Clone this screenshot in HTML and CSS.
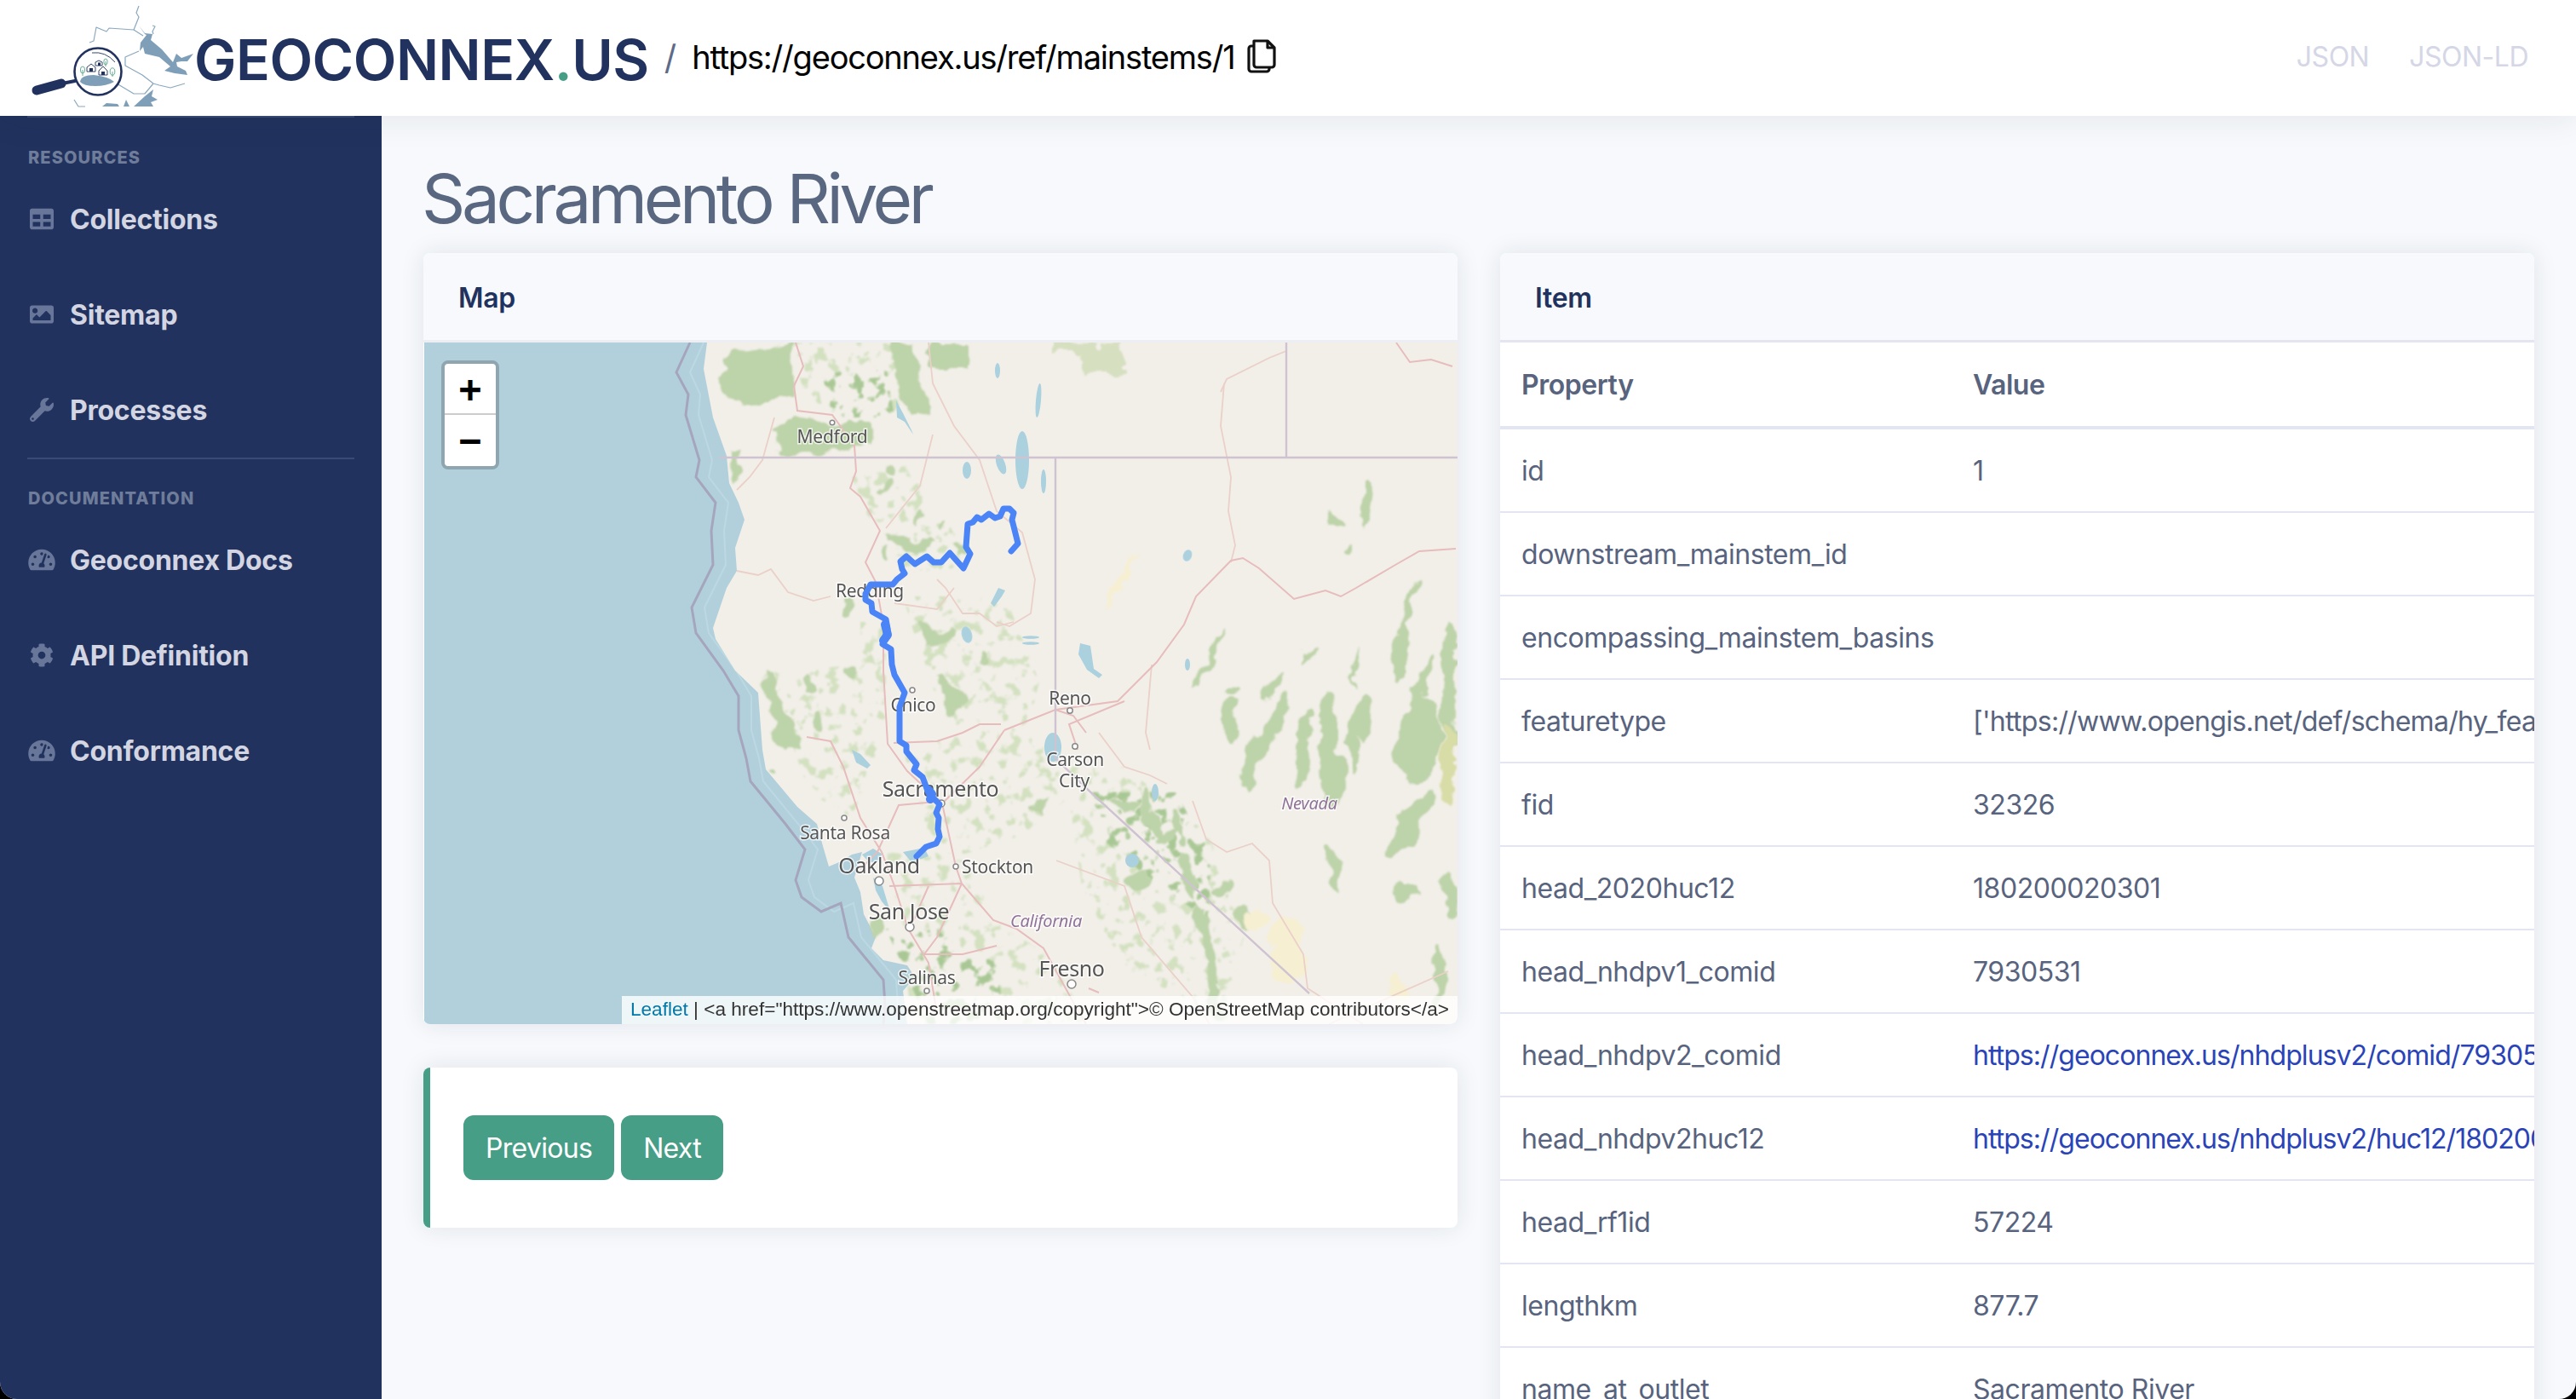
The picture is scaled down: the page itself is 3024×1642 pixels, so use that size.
FILE: index.html
```html
<!DOCTYPE html>
<html lang="en">
<head>
<meta charset="utf-8">
<title>Sacramento River</title>
<link rel="stylesheet" href="styles.css">
</head>
<body>
<svg class="defs" width="0" height="0">
  <symbol id="i-table" viewBox="0 0 512 512"><path d="M464 32H48C21.49 32 0 53.49 0 80v352c0 26.51 21.49 48 48 48h416c26.51 0 48-21.49 48-48V80c0-26.51-21.49-48-48-48zM224 416H64v-96h160v96zm0-160H64v-96h160v96zm224 160H288v-96h160v96zm0-160H288v-96h160v96z"/></symbol>
  <symbol id="i-image" viewBox="0 0 512 512"><path d="M464 448H48c-26.51 0-48-21.49-48-48V112c0-26.51 21.49-48 48-48h416c26.51 0 48 21.49 48 48v288c0 26.51-21.49 48-48 48zM112 120c-30.928 0-56 25.072-56 56s25.072 56 56 56 56-25.072 56-56-25.072-56-56-56zM64 384h384V272l-87.515-87.515c-4.686-4.686-12.284-4.686-16.971 0L208 320l-55.515-55.515c-4.686-4.686-12.284-4.686-16.971 0L64 336v48z"/></symbol>
  <symbol id="i-wrench" viewBox="0 0 512 512"><path d="M507.73 109.1c-2.24-9.03-13.54-12.09-20.12-5.51l-74.36 74.36-67.88-11.31-11.31-67.88 74.36-74.36c6.62-6.62 3.43-17.9-5.66-20.16-47.38-11.74-99.55.91-136.58 37.93-39.64 39.64-50.55 97.1-34.05 147.2L18.74 402.76c-24.99 24.99-24.99 65.51 0 90.5 24.99 24.99 65.51 24.99 90.5 0l213.21-213.21c50.12 16.71 107.47 5.68 147.37-34.22 37.07-37.07 49.7-89.32 37.91-136.73zM64 472c-13.25 0-24-10.75-24-24 0-13.26 10.75-24 24-24s24 10.74 24 24c0 13.25-10.75 24-24 24z"/></symbol>
  <symbol id="i-gauge" viewBox="0 0 576 512"><path d="M288 32C128.94 32 0 160.94 0 320c0 52.8 14.25 102.26 39.06 144.8 5.61 9.62 16.3 15.2 27.44 15.2h443c11.14 0 21.83-5.58 27.44-15.2C561.75 422.26 576 372.8 576 320c0-159.06-128.94-288-288-288zm0 64c14.71 0 26.58 10.13 30.32 23.65-1.11 2.26-2.64 4.23-3.45 6.67l-9.22 27.67c-5.13 3.49-10.97 6.01-17.64 6.01-17.67 0-32-14.33-32-32S270.33 96 288 96zM96 384c-17.67 0-32-14.33-32-32s14.33-32 32-32 32 14.33 32 32-14.33 32-32 32zm48-160c-17.67 0-32-14.33-32-32s14.33-32 32-32 32 14.33 32 32-14.33 32-32 32zm246.77-72.41l-61.33 184C343.13 347.33 352 364.54 352 384c0 11.72-3.38 22.55-8.88 32H232.88c-5.5-9.45-8.88-20.28-8.88-32 0-33.94 26.5-61.43 59.9-63.59l61.34-184.01c4.17-12.56 17.73-19.45 30.36-15.17 12.57 4.19 19.35 17.79 15.17 30.36zm14.66 57.2l15.52-46.55c3.47-1.29 7.13-2.23 11.05-2.23 17.67 0 32 14.33 32 32s-14.33 32-32 32c-11.38-.01-20.89-6.28-26.57-15.22zM480 384c-17.67 0-32-14.33-32-32s14.33-32 32-32 32 14.33 32 32-14.33 32-32 32z"/></symbol>
  <symbol id="i-cog" viewBox="0 0 512 512"><path d="M487.4 315.7l-42.6-24.6c4.3-23.2 4.3-47 0-70.2l42.6-24.6c4.9-2.8 7.1-8.6 5.5-14-11.1-35.6-30-67.8-54.7-94.6-3.8-4.1-10-5.1-14.8-2.3L380.8 110c-17.9-15.4-38.5-27.3-60.8-35.1V25.8c0-5.6-3.9-10.5-9.4-11.7-36.7-8.2-74.3-7.8-109.2 0-5.5 1.2-9.4 6.1-9.4 11.7V75c-22.2 7.9-42.8 19.8-60.8 35.1L88.7 85.5c-4.9-2.8-11-1.9-14.8 2.3-24.7 26.7-43.6 58.9-54.7 94.6-1.7 5.4.6 11.2 5.5 14L67.3 221c-4.3 23.2-4.3 47 0 70.2l-42.6 24.6c-4.9 2.8-7.1 8.6-5.5 14 11.1 35.6 30 67.8 54.7 94.6 3.8 4.1 10 5.1 14.8 2.3l42.6-24.6c17.9 15.4 38.5 27.3 60.8 35.1v49.2c0 5.6 3.9 10.5 9.4 11.7 36.7 8.2 74.3 7.8 109.2 0 5.5-1.2 9.4-6.1 9.4-11.7v-49.2c22.2-7.9 42.8-19.8 60.8-35.1l42.6 24.6c4.9 2.8 11 1.9 14.8-2.3 24.7-26.7 43.6-58.9 54.7-94.6 1.5-5.5-.7-11.3-5.6-14.1zM256 336c-44.1 0-80-35.9-80-80s35.9-80 80-80 80 35.9 80 80-35.9 80-80 80z"/></symbol>
</svg>
<div class="app">
  <header class="topbar">
    <svg class="logo" viewBox="0 0 192 136" width="192" height="136">
      <g transform="translate(-36 0)">
        <g fill="none" stroke="#8aa8bf" stroke-width="1.2" stroke-linejoin="round">
          <path d="M163 7 160 15 163 20 157 35 128 33 125 37 113 32 110 48 105 50"/>
          <path d="M157 35 168 42"/>
          <path d="M179 30 182 31 179 37 180 40"/>
          <path d="M163 60 147 67 147 77 167 88 180 98 187 100 200 103 217 98"/>
          <path d="M137 98 157 110 170 110 180 98"/>
          <path d="M87 117 92 125 100 125"/>
        </g>
        <g fill="#7f9fb8">
          <path d="M163 30 170 40 172 41 165 50 164 60 168 55 170 63 187 67 200 78 193 83 205 86 220 88 218 83 208 78 207 73 213 72 220 72 227 63 213 68 207 63 203 73 190 58 177 47 179 40 170 39Z"/>
          <path d="M120 125 125 121 138 122 140 125Z"/>
          <path d="M145 125 148 117 152 125Z"/>
          <path d="M157 125 170 113 180 105 178 113 185 117 177 120 180 125Z"/>
          <path d="M94 96Q95 88 110 88 128 90 134 96 125 101 112 101 98 101 94 96Z"/>
        </g>
        <circle cx="115" cy="84" r="27.5" fill="none" stroke="#21325e" stroke-width="2.6"/>
        <path d="M108 62Q124 60 135 73" fill="none" stroke="#21325e" stroke-width=".9"/>
        <path d="M88 95 73 98" stroke="#21325e" stroke-width="4" stroke-linecap="round"/>
        <path d="M72 98 43 106" stroke="#21325e" stroke-width="11" stroke-linecap="round"/>
        <g fill="#fff" stroke="#21325e" stroke-width=".9">
          <path d="M102 84V79L107 75 112 79V84Z"/>
          <path d="M112 77V73L116 71 120 73V77Z"/>
          <path d="M116 88V83L121 78 126 83V88Z"/>
        </g>
        <g fill="#21325e">
          <rect x="105" y="80" width="4" height="4"/>
          <rect x="115" y="73.500" width="3" height="3.500"/>
          <rect x="119" y="84" width="4" height="4"/>
        </g>
        <g fill="none" stroke="#5aa48c" stroke-width=".9">
          <ellipse cx="97" cy="82" rx="2.600" ry="4"/>
          <ellipse cx="124" cy="72.500" rx="2.200" ry="3.500"/>
          <ellipse cx="132" cy="84" rx="2.800" ry="4.200"/>
          <path d="M97 82V89M124 72V78M132 84V90"/>
        </g>
      </g>
    </svg>
    <span class="brand">GEOCONNEX<span class="brand-dot">.</span>US</span>
    <span class="crumb-sep">/</span>
    <span class="crumb">https://geoconnex.us/ref/mainstems/1</span>
    <svg class="copy" viewBox="0 0 34 40" width="34" height="40" fill="none" stroke="#111" stroke-width="3.200" stroke-linejoin="round">
      <path d="M8 2H24L32 10V30A3 3 0 0 1 29 33H11A3 3 0 0 1 8 30Z"/>
      <path d="M24 2V10H32"/>
      <path d="M8 8H5A3 3 0 0 0 2 11V35A3 3 0 0 0 5 38H23A3 3 0 0 0 26 35V33"/>
    </svg>
    <nav class="formats">
      <a class="format">JSON</a>
      <a class="format">JSON-LD</a>
    </nav>
  </header>
  <div class="body">
    <aside class="sidebar">
      <div class="side-rule"></div>
      <div class="side-label">RESOURCES</div>
      <a class="side-item"><span class="side-icon"><svg class="ic-w28"><use href="#i-table"/></svg></span>Collections</a>
      <a class="side-item"><span class="side-icon"><svg class="ic-w28"><use href="#i-image"/></svg></span>Sitemap</a>
      <a class="side-item"><span class="side-icon"><svg class="ic-w28"><use href="#i-wrench"/></svg></span>Processes</a>
      <div class="side-divider"></div>
      <div class="side-label side-label-next">DOCUMENTATION</div>
      <a class="side-item"><span class="side-icon"><svg class="ic-w32"><use href="#i-gauge"/></svg></span>Geoconnex Docs</a>
      <a class="side-item"><span class="side-icon"><svg class="ic-w28"><use href="#i-cog"/></svg></span>API Definition</a>
      <a class="side-item"><span class="side-icon"><svg class="ic-w32"><use href="#i-gauge"/></svg></span>Conformance</a>
    </aside>
    <main class="main">
      <h1 class="title">Sacramento River</h1>
      <div class="columns">
        <div class="col">
          <section class="card">
            <div class="card-head card-head-map"><span class="head-text">Map</span></div>
            <div class="map">
              <svg class="map-svg" viewBox="498 402 1213 800" width="1213" height="800">
                <defs>
                  <filter id="softer" x="-5%" y="-5%" width="110%" height="110%"><feGaussianBlur stdDeviation=".6"/></filter>
                  <filter id="organic" x="-5%" y="-5%" width="110%" height="110%">
                    <feTurbulence type="fractalNoise" baseFrequency=".035" numOctaves="3" seed="4" result="n"/>
                    <feDisplacementMap in="SourceGraphic" in2="n" scale="26" xChannelSelector="R" yChannelSelector="G"/>
                    <feGaussianBlur stdDeviation="1"/>
                  </filter>
                  <filter id="mottle" x="-5%" y="-5%" width="110%" height="110%">
                    <feTurbulence type="fractalNoise" baseFrequency=".07" numOctaves="3" seed="9" result="n"/>
                    <feColorMatrix in="n" type="matrix" values="0 0 0 0 0  0 0 0 0 0  0 0 0 0 0  10 0 0 0 -5.600" result="m"/>
                    <feComposite in="SourceGraphic" in2="m" operator="in"/>
                    <feGaussianBlur stdDeviation=".9"/>
                  </filter>
                </defs>
                <rect x="498" y="402" width="1213" height="800" fill="#b1d0dc"/>
                <g fill="none" filter="url(#softer)">
                  <path d="M826 402 810 437 822 463 820 487 836 540 832 560 855 590 850 623 852 663 827 713 832 743 864 787 882 817 882 857 891 890 896 917 937 967 960 997 949 1033 956 1053 979 1070 1002 1060 1011 1100 1052 1150 1054 1180 1052 1202" stroke="#bcd8e2" stroke-width="2"/>
                  <path d="M810 402 794 437 808 463 805 487 821 540 817 560 840 590 835 623 837 663 812 713 817 743 849 787 867 817 867 857 876 890 881 917 922 967 945 997 934 1033 941 1053 964 1070 987 1060 996 1100 1037 1150 1039 1180 1037 1202" stroke="#a5a6bd" stroke-width="3"/>
                </g>
                <path filter="url(#softer)" fill="#f2efe9" d="M830 402 826 433 837 490 853 535 856 567 867 590 874 610 863 643 865 670 853 690 837 737 840 750 863 787 890 813 895 880 899 903 936 947 959 967 966 993 973 1017 985 1012 1000 1003 1012 1000 1003 1030 1010 1047 1014 1073 1028 1100 1023 1113 1037 1127 1065 1133 1074 1147 1060 1163 1065 1202 1711 1202 1711 402Z"/>
                <g filter="url(#mottle)" fill="#d3e1c0">
                  <path d="M930 402 1046 402 1060 470 1040 495 990 480 945 470Z"/>
                  <path d="M1040 625 1110 610 1135 650 1120 680 1060 670Z"/>
                  <path d="M1000 560 1060 540 1090 580 1060 620 1020 610Z"/>
                  <path d="M1060 700 1180 700 1220 800 1200 880 1140 880 1090 800Z"/>
                  <path d="M900 790 1010 780 1030 880 1000 960 950 930Z"/>
                  <path d="M1010 730 1040 730 1040 880 1015 880Z"/>
                  <path d="M1060 880 1180 850 1240 880 1250 940 1200 980 1140 1000 1100 1010Z"/>
                  <path d="M1040 1000 1130 1010 1180 1090 1230 1120 1280 1202 1070 1202 1060 1100Z"/>
                  <path d="M1250 900 1320 900 1420 980 1460 1100 1440 1202 1320 1140 1270 1040Z"/>
                </g>
                <g filter="url(#mottle)" fill="#a9c795">
                  <path d="M1040 1090 1100 1090 1120 1110 1170 1130 1180 1202 1090 1202Z"/>
                  <path d="M1280 930 1380 930 1420 1000 1420 1080 1360 1040 1300 990Z"/>
                  <path d="M960 440 1040 430 1050 490 980 490Z"/>
                </g>
                <g filter="url(#organic)" fill="#bdd3a9">
                  <path d="M840 440 852 425 870 413 916 402 928 402 930 462 872 476 850 470Z"/>
                  <path d="M910 505 945 490 990 492 1020 498 1024 520 1000 528 950 533 916 528Z"/>
                  <path d="M1046 402 1072 402 1080 450 1092 488 1078 486 1068 494 1058 470 1052 440Z"/>
                  <path d="M1092 402 1134 402 1134 432 1092 432Z"/>
                  <path d="M857 528 874 528 866 560 860 568Z"/>
                  <path d="M1040 632 1076 626 1095 640 1084 648 1060 642 1042 640Z"/>
                  <path d="M1117 637 1128 635 1130 648 1120 650Z"/>
                  <path d="M992 704 1006 712 998 720 988 718Z"/>
                  <path d="M1076 728 1092 732 1116 742 1120 750 1098 753 1086 758 1082 745Z"/>
                  <path d="M1098 795 1108 795 1132 825 1122 836 1115 834 1100 812Z"/>
                  <ellipse cx="1156" cy="770" rx="5" ry="7"/>
                  <ellipse cx="1040" cy="656" rx="4" ry="9"/>
                  <ellipse cx="1080" cy="610" rx="3" ry="10"/>
                  <ellipse cx="1105" cy="620" rx="3" ry="8"/>
                  <ellipse cx="1040" cy="548" rx="5" ry="8"/>
                  <ellipse cx="1040" cy="570" rx="4" ry="9" transform="rotate(20 1040 570)"/>
                  <path d="M897 790 905 790 926 840 936 876 925 884 907 858 900 820Z"/>
                  <ellipse cx="959" cy="847" rx="6" ry="12"/>
                  <ellipse cx="950" cy="800" rx="5" ry="10"/>
                  <ellipse cx="1000" cy="790" rx="6" ry="8"/>
                  <ellipse cx="906" cy="903" rx="5" ry="3"/>
                  <path d="M1207 950 1230 937 1234 927 1224 952 1207 956Z"/>
                  <ellipse cx="1320" cy="945" rx="18" ry="8" transform="rotate(10 1320 945)"/>
                  <ellipse cx="1349" cy="956" rx="7" ry="34" transform="rotate(-15 1349 956)"/>
                  <ellipse cx="1370" cy="985" rx="18" ry="6" transform="rotate(-20 1370 985)"/>
                  <ellipse cx="1385" cy="970" rx="6" ry="20" transform="rotate(-25 1385 970)"/>
                  <ellipse cx="1606" cy="593" rx="8" ry="28" transform="rotate(12 1606 593)"/>
                  <ellipse cx="1567" cy="610" rx="13" ry="5" transform="rotate(35 1567 610)"/>
                  <ellipse cx="1580" cy="643" rx="5" ry="7"/>
                  <ellipse cx="1420" cy="773" rx="4" ry="42" transform="rotate(30 1420 773)"/>
                  <ellipse cx="1656" cy="707" rx="4" ry="32" transform="rotate(20 1656 707)"/>
                  <ellipse cx="1643" cy="767" rx="7" ry="38" transform="rotate(5 1643 767)"/>
                  <ellipse cx="1537" cy="770" rx="3" ry="15" transform="rotate(30 1537 770)"/>
                  <ellipse cx="1592" cy="783" rx="2" ry="30" transform="rotate(10 1592 783)"/>
                  <ellipse cx="1491" cy="807" rx="4" ry="18" transform="rotate(20 1491 807)"/>
                  <ellipse cx="1445" cy="810" rx="5" ry="6"/>
                  <ellipse cx="1702" cy="767" rx="8" ry="35"/>
                  <ellipse cx="1670" cy="800" rx="6" ry="35" transform="rotate(20 1670 800)"/>
                  <ellipse cx="1445" cy="847" rx="10" ry="28"/>
                  <ellipse cx="1491" cy="857" rx="10" ry="50" transform="rotate(25 1491 857)"/>
                  <ellipse cx="1533" cy="867" rx="7" ry="35" transform="rotate(10 1533 867)"/>
                  <ellipse cx="1560" cy="860" rx="11" ry="45"/>
                  <ellipse cx="1601" cy="843" rx="13" ry="28"/>
                  <ellipse cx="1588" cy="873" rx="7" ry="35"/>
                  <ellipse cx="1666" cy="867" rx="26" ry="50" transform="rotate(10 1666 867)"/>
                  <ellipse cx="1702" cy="833" rx="8" ry="50"/>
                  <ellipse cx="1468" cy="898" rx="9" ry="35" transform="rotate(15 1468 898)"/>
                  <ellipse cx="1528" cy="894" rx="9" ry="30"/>
                  <ellipse cx="1565" cy="917" rx="13" ry="30"/>
                  <ellipse cx="1656" cy="967" rx="12" ry="48" transform="rotate(35 1656 967)"/>
                  <ellipse cx="1565" cy="1021" rx="7" ry="28" transform="rotate(-15 1565 1021)"/>
                  <ellipse cx="1652" cy="1047" rx="12" ry="7"/>
                  <ellipse cx="1700" cy="1051" rx="8" ry="28"/>
                  <ellipse cx="1395" cy="1028" rx="6" ry="30" transform="rotate(-15 1395 1028)"/>
                  <ellipse cx="1436" cy="1040" rx="5" ry="12" transform="rotate(30 1436 1040)"/>
                  <ellipse cx="1459" cy="1074" rx="10" ry="13"/>
                  <ellipse cx="1335" cy="1032" rx="14" ry="8"/>
                  <ellipse cx="1415" cy="1109" rx="7" ry="48" transform="rotate(-15 1415 1109)"/>
                  <ellipse cx="1422" cy="1165" rx="6" ry="35" transform="rotate(-15 1422 1165)"/>
                  <ellipse cx="1689" cy="1147" rx="6" ry="45"/>
                  <ellipse cx="1032" cy="1087" rx="9" ry="15"/>
                </g>
                <g filter="url(#organic)">
                  <path d="M1241 402 1317 402 1317 441 1270 441 1270 415 1241 415Z" fill="#d6dfbf"/>
                  <ellipse cx="1700" cy="898" rx="10" ry="45" fill="#d8dca6"/>
                  <ellipse cx="1477" cy="1078" rx="16" ry="10" fill="#f6efd2"/>
                  <ellipse cx="1510" cy="1115" rx="20" ry="40" fill="#f6efd2"/>
                  <ellipse cx="1317" cy="677" rx="5" ry="38" transform="rotate(30 1317 677)" fill="#f6efd2"/>
                  <ellipse cx="1640" cy="1170" rx="8" ry="26" fill="#f6efd2"/>
                </g>
                <g filter="url(#softer)" fill="#abd0de">
                  <path d="M1052 470 1060 485 1070 505 1072 510 1062 495 1053 490Z"/>
                  <ellipse cx="1200" cy="540" rx="8" ry="34"/>
                  <ellipse cx="1175" cy="545" rx="5" ry="12" transform="rotate(-20 1175 545)"/>
                  <ellipse cx="1135" cy="552" rx="5" ry="10"/>
                  <ellipse cx="1219" cy="470" rx="3" ry="20" transform="rotate(5 1219 470)"/>
                  <ellipse cx="1171" cy="435" rx="3" ry="9"/>
                  <ellipse cx="1225" cy="565" rx="3" ry="14"/>
                  <path d="M1180 693 1176 700 1167 712 1163 708 1172 690Z"/>
                  <ellipse cx="1135" cy="745" rx="6" ry="10" transform="rotate(-15 1135 745)"/>
                  <ellipse cx="1210" cy="748" rx="10" ry="1.800"/>
                  <ellipse cx="1210" cy="755" rx="10" ry="1.800"/>
                  <path d="M1268 755 1280 758 1284 785 1294 792 1290 796 1276 786 1266 768Z"/>
                  <ellipse cx="1236" cy="877" rx="10" ry="17"/>
                  <ellipse cx="1394" cy="780" rx="3" ry="7"/>
                  <ellipse cx="1394" cy="652" rx="5" ry="7" transform="rotate(20 1394 652)"/>
                  <path d="M1000 880 1010 885 1022 898 1018 902 1005 895Z"/>
                  <ellipse cx="1329" cy="1010" rx="8" ry="8"/>
                  <ellipse cx="1356" cy="930" rx="4" ry="10"/>
                  <path d="M1012 1003 1025 996 1035 1002 1033 1012 1020 1012Z"/>
                  <path d="M1025 1030 1036 1040 1045 1070 1035 1058 1028 1045Z"/>
                  <path d="M1060 1000 1085 995 1090 1005 1070 1012Z"/>
                </g>
                <g fill="none" stroke="#ead0c8" stroke-width="1.800" filter="url(#softer)">
                  <path d="M909 490 895 540 880 560 865 575"/>
                  <path d="M865 670 890 675 905 668 925 695 955 705 975 700"/>
                  <path d="M1090 402 1095 450 1120 500 1150 540 1170 600 1200 625 1215 680 1210 720 1185 735 1170 730"/>
                  <path d="M1095 510 1080 570 1040 620"/>
                  <path d="M1100 680 1110 690 1130 720 1150 720 1170 735 1190 730"/>
                  <path d="M1120 690 1100 715 1050 708"/>
                  <path d="M1437 450 1433 500 1445 560 1442 600 1450 640 1445 660"/>
                  <path d="M1433 460 1440 445 1490 420 1510 412"/>
                  <path d="M1290 860 1320 900 1350 910 1370 920"/>
                  <path d="M1400 940 1416 985 1440 1000 1470 990 1490 1010 1494 1060 1530 1120 1535 1160 1600 1202"/>
                  <path d="M1350 880 1345 860 1352 780"/>
                  <path d="M1240 1010 1320 1040 1340 1100 1400 1170 1420 1202"/>
                  <path d="M1560 1202 1700 1140"/>
                </g>
                <g fill="none" stroke="#e7bcbd" stroke-width="2" filter="url(#softer)">
                  <path d="M934 402 943 430 932 453 936 482 977 487 1003 523 1005 553 998 573 1010 583 1033 623 1016 660 1028 683 1037 733 1037 787 1042 873 1065 905 1106 943 1122 1017 1129 1037 1166 1080 1193 1090 1225 1113 1262 1180 1275 1202"/>
                  <path d="M1179 857 1239 833 1312 823 1358 777 1390 733 1404 700 1445 658 1459 655 1478 667 1519 703 1556 693 1574 700 1592 690 1638 663 1666 647 1709 644"/>
                  <path d="M1106 943 1150 900 1179 857"/>
                  <path d="M1639 402 1655 425 1680 422 1705 430"/>
                  <path d="M947 865 975 870 990 900 1010 960 1035 1000 1050 1040 1066 1090 1090 1130 1100 1190"/>
                  <path d="M1049 872 1100 870 1130 860 1150 850 1175 850"/>
                  <path d="M1110 940 1055 945 1030 1000 1010 1020"/>
                  <path d="M1044 1040 1129 1037"/>
                  <path d="M1068 1090 1090 1040"/>
                  <path d="M1129 1037 1100 1100 1085 1120 1130 1120 1170 1110"/>
                  <path d="M1278 1160 1290 1165"/>
                  <path d="M1265 880 1255 850 1320 823"/>
                  <path d="M1239 833 1260 840 1275 860"/>
                </g>
                <g fill="none" stroke="#cfc3d2" stroke-width="2.400" filter="url(#softer)">
                  <path d="M845 537H1711"/>
                  <path d="M1239 537V890L1275 925 1537 1166"/>
                  <path d="M1510 402V537"/>
                </g>
                <g class="place-dots">
                  <circle cx="977" cy="496" r="2.800"/>
                  <circle cx="1071" cy="810" r="3"/>
                  <circle cx="1256" cy="834" r="3.200"/>
                  <circle cx="1262" cy="876" r="3.200"/>
                  <circle cx="1105" cy="943" r="4"/>
                  <circle cx="991" cy="960" r="3"/>
                  <circle cx="1032" cy="1034" r="5"/>
                  <circle cx="1122" cy="1017" r="3"/>
                  <circle cx="1068" cy="1088" r="5"/>
                  <circle cx="1088" cy="1163" r="3"/>
                  <circle cx="1258" cy="1155" r="5"/>
                </g>
                <g class="place">
                  <text x="977" y="520">Medford</text>
                  <text x="1021" y="701">Redding</text>
                  <text x="1072" y="835">Chico</text>
                  <text x="1256" y="827">Reno</text>
                  <text x="1262" y="899">Carson</text>
                  <text x="1261" y="924">City</text>
                  <text x="1104" y="935" class="place-lg">Sacramento</text>
                  <text x="992" y="985">Santa Rosa</text>
                  <text x="1032" y="1025" class="place-lg">Oakland</text>
                  <text x="1171" y="1025">Stockton</text>
                  <text x="1067" y="1079" class="place-lg">San Jose</text>
                  <text x="1088" y="1155">Salinas</text>
                  <text x="1258" y="1146" class="place-lg">Fresno</text>
                  <text x="1228" y="1088" class="place-state">California</text>
                  <text x="1537" y="950" class="place-state">Nevada</text>
                </g>
                <g fill="none" stroke="#4a84f7" stroke-width="7" stroke-linejoin="round" stroke-linecap="round">
                  <path d="M1187 647 1195 638 1188 610 1190 602 1185 597 1178 597 1174 606 1168 608 1161 603 1152 610 1147 607 1142 613 1136 615 1134 642 1139 650 1131 667 1122 657 1115 649 1105 660 1096 660 1088 653 1074 662 1064 653 1057 659 1059 668 1062 673 1053 680 1048 686 1022 686 1016 697 1016 704 1023 708 1024 718 1040 727 1042 738 1039 748 1036 756 1046 762 1047 780 1050 792 1062 813 1056 830 1056 870 1064 875 1064 882 1076 897 1073 904 1083 912 1090 931 1103 944 1099 954 1102 960 1101 973 1103 982 1099 990 1087 994 1076 1005"/>
                  <path d="M1039 733 1042 745 1037 752" stroke-width="10"/>
                  <path d="M1090 927 1094 932 1092 938" stroke-width="10"/>
                </g>
              </svg>
              <div class="zoom-box">
                <a class="zoom-btn zoom-in">+</a>
                <a class="zoom-btn">&#8722;</a>
              </div>
              <div class="attrib"><a class="attrib-link">Leaflet</a> | &lt;a href="https://www.openstreetmap.org/copyright"&gt;© OpenStreetMap contributors&lt;/a&gt;</div>
            </div>
          </section>
          <section class="card card-actions">
            <a class="btn">Previous</a>
            <a class="btn">Next</a>
          </section>
        </div>
        <div class="col">
          <section class="card card-item">
            <div class="card-head"><span class="head-text">Item</span></div>
            <table class="props">
              <colgroup><col class="col-key"><col></colgroup>
              <thead><tr><th>Property</th><th>Value</th></tr></thead>
              <tbody>
                <tr><td>id</td><td>1</td></tr>
                <tr><td>downstream_mainstem_id</td><td></td></tr>
                <tr><td>encompassing_mainstem_basins</td><td></td></tr>
                <tr><td>featuretype</td><td class="url-cell">['https://www.opengis.net/def/schema/hy_features/hyf/HY_River']</td></tr>
                <tr><td>fid</td><td>32326</td></tr>
                <tr><td>head_2020huc12</td><td>180200020301</td></tr>
                <tr><td>head_nhdpv1_comid</td><td>7930531</td></tr>
                <tr><td>head_nhdpv2_comid</td><td><a class="link">https://geoconnex.us/nhdplusv2/comid/7930531</a></td></tr>
                <tr><td>head_nhdpv2huc12</td><td><a class="link">https://geoconnex.us/nhdplusv2/huc12/180200020301</a></td></tr>
                <tr><td>head_rf1id</td><td>57224</td></tr>
                <tr><td>lengthkm</td><td>877.7</td></tr>
                <tr><td>name_at_outlet</td><td>Sacramento River</td></tr>
              </tbody>
            </table>
          </section>
        </div>
      </div>
    </main>
  </div>
</div>
</body>
</html>
```
FILE: styles.css
```css
* { box-sizing: border-box; }
html { background: #000; }
html, body { margin: 0; height: 100%; }
body { font-family: Inter, "Liberation Sans", sans-serif; overflow: hidden; }
a { color: inherit; text-decoration: none; }
.defs { position: absolute; }

.app {
  width: 3024px;
  height: 1642px;
  display: flex;
  flex-direction: column;
  background: #f7f9fc;
  border-radius: 0 0 20px 20px;
  overflow: hidden;
}

/* top bar */
.topbar {
  position: relative;
  z-index: 2;
  flex: 0 0 136px;
  display: flex;
  align-items: center;
  padding-left: 36px;
  padding-right: 56px;
  background: #fff;
  box-shadow: 0 0 40px rgba(33, 37, 60, 0.1);
}
.brand {
  font-size: 66px;
  font-weight: 600;
  color: #21325e;
  letter-spacing: -0.5px;
  line-height: 1;
  margin-top: 4px;
}
.brand-dot { color: #479e87; }
.crumb-sep { margin-left: 18px; margin-bottom: 2px; font-size: 40px; color: #5e6b88; }
.crumb {
  margin-left: 18px;
  margin-bottom: 3px;
  font-size: 38px;
  letter-spacing: -1.2px;
  color: #000;
}
.copy { margin-left: 15px; margin-top: -5px; }
.formats { margin-left: auto; display: flex; gap: 47px; margin-bottom: 3px; }
.format { font-size: 32px; letter-spacing: -0.5px; color: #d5d7e6; }

/* layout */
.body { flex: 1; display: flex; min-height: 0; }
.sidebar {
  flex: 0 0 448px;
  background: #21325e;
  color: #d3d6e2;
  display: flex;
  flex-direction: column;
}
.side-rule { height: 2px; margin: 0 32px; background: #3a4a74; }
.side-label {
  margin-top: 30px;
  padding-left: 33px;
  font-size: 20px;
  line-height: 34px;
  font-weight: 800;
  letter-spacing: 1.1px;
  color: #6f7d9a;
}
.side-label-next { margin-top: 29px; }
.side-item {
  height: 112px;
  display: flex;
  align-items: center;
  padding-left: 33px;
  padding-bottom: 2px;
  font-size: 32px;
  font-weight: 700;
  letter-spacing: -0.25px;
}
.side-icon {
  width: 32px;
  height: 32px;
  margin-right: 17px;
  display: flex;
  align-items: center;
  justify-content: center;
  fill: #68769a;
}
.ic-w28 { width: 28px; height: 28px; }
.ic-w32 { width: 32px; height: 28px; }
.side-divider { height: 2px; margin: -1px 32px 0; background: #3a4a74; }

.main { flex: 1; min-width: 0; padding: 49px 49px 0; }
.title {
  margin: 0 0 16px -2px;
  font-size: 80px;
  line-height: 96px;
  font-weight: 400;
  letter-spacing: -4.4px;
  color: #5a6780;
}
.columns { display: grid; grid-template-columns: 1214px 1214px; column-gap: 50px; }
.col { display: flex; flex-direction: column; }

/* cards */
.card {
  background: #fff;
  border-radius: 8px;
  box-shadow: 0 0 28px rgba(33, 37, 70, 0.1);
  overflow: hidden;
}
.card-head {
  height: 105px;
  padding-left: 41px;
  display: flex;
  align-items: center;
  font-size: 32px;
  font-weight: 600;
  letter-spacing: -0.3px;
  color: #21325e;
  background: #f8f9fd;
  border-bottom: 3px solid #e3e6f0;
}
.head-text { margin-top: 2px; }
.card-head-map { border-bottom-color: #eceef4; }
.map { position: relative; height: 800px; overflow: hidden; }
.map-svg { display: block; margin-left: 1px; }
.place text {
  font-family: "Noto Sans", "Open Sans", sans-serif;
  font-size: 21px;
  letter-spacing: -0.3px;
  text-anchor: middle;
  fill: #555;
  stroke: rgba(255, 255, 255, 0.75);
  stroke-width: 3px;
  paint-order: stroke;
}
.place .place-lg { font-size: 25px; letter-spacing: -0.4px; }
.place .place-state { font-style: italic; font-size: 20px; fill: #8f7398; }
.place-dots circle { fill: #fff; stroke: #888; stroke-width: 1.5; }

.zoom-box {
  position: absolute;
  top: 21px;
  left: 21px;
  width: 68px;
  border: 4px solid #8fa6b0;
  border-radius: 8px;
  background: #fff;
  overflow: hidden;
}
.zoom-btn {
  display: block;
  height: 60px;
  font-family: "DejaVu Sans Mono", "Liberation Mono", monospace;
  font-weight: 700;
  font-size: 44px;
  line-height: 60px;
  text-align: center;
  color: #000;
}
.zoom-in { border-bottom: 2px solid #ccc; }
.attrib {
  position: absolute;
  right: 0;
  bottom: 0;
  height: 33px;
  padding: 0 10px;
  font-family: "Liberation Sans", sans-serif;
  font-size: 22.6px;
  line-height: 31px;
  color: #333;
  background: rgba(255, 255, 255, 0.8);
  white-space: nowrap;
}
.attrib-link { color: #0078a8; }

.card-actions {
  margin-top: 51px;
  height: 188px;
  padding-left: 39px;
  display: flex;
  align-items: center;
  gap: 8px;
  border-left: 8px solid #479e87;
}
.btn {
  height: 76px;
  padding: 0 26px;
  display: flex;
  align-items: center;
  font-size: 32px;
  letter-spacing: -0.7px;
  color: #fff;
  background: #479e87;
  border-radius: 12px;
}

/* property table */
.props {
  width: 1214px;
  table-layout: fixed;
  border-collapse: separate;
  border-spacing: 0;
  font-size: 32px;
  letter-spacing: -0.45px;
  color: #58637e;
}
.col-key { width: 530px; }
.props th, .props td {
  padding: 0 25px;
  text-align: left;
  white-space: nowrap;
  font-weight: 400;
}
.props th { height: 102px; font-weight: 600; border-bottom: 4px solid #e3e6f0; }
.props td { height: 98px; border-bottom: 2px solid #e3e6f0; }
.props .url-cell { letter-spacing: -0.7px; }
.link { color: #2a44b8; letter-spacing: -0.95px; }
```
